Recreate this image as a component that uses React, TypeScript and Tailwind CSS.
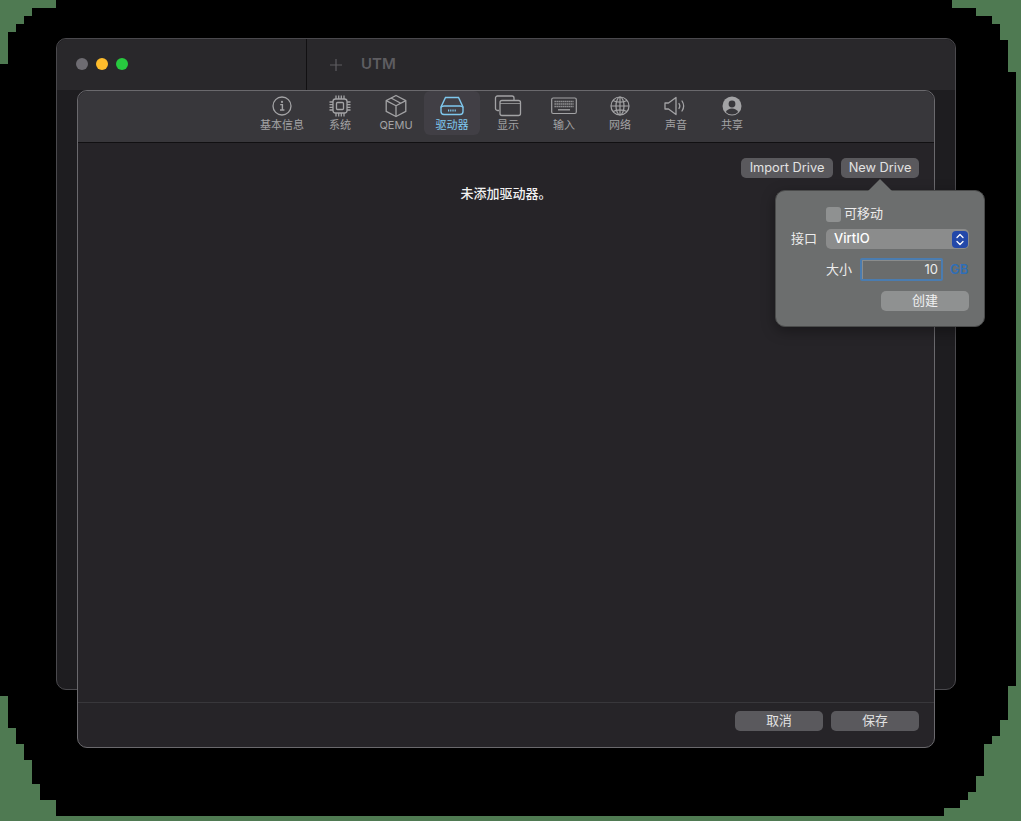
import { ReactNode } from "react";

const cjk = "font-['Inter','Noto_Sans_CJK_SC',sans-serif]";

function InfoIcon() {
  return (
    <svg width="20" height="20" viewBox="0 0 20 20" fill="none" stroke="currentColor" strokeWidth="1.3">
      <circle cx="10" cy="10" r="9" />
      <circle cx="10" cy="5.900" r="1.100" fill="currentColor" stroke="none" />
      <path d="M8.200 8.600h2.200v5.200M8 14h4.400" strokeWidth="1.400" />
    </svg>
  );
}

function CpuIcon() {
  return (
    <svg width="24" height="24" viewBox="0 0 24 24" fill="none" stroke="currentColor" strokeWidth="1.300">
      <rect x="5" y="5" width="14" height="14" rx="2.500" />
      <rect x="8.500" y="8.500" width="7" height="7" rx="1" />
      <path d="M8 1.500V5M10.700 1.500V5M13.300 1.500V5M16 1.500V5M8 19v3.500M10.700 19v3.500M13.300 19v3.500M16 19v3.500M1.500 8H5M1.500 10.700H5M1.500 13.300H5M1.500 16H5M19 8h3.500M19 10.700h3.500M19 13.300h3.500M19 16h3.500" />
    </svg>
  );
}

function BoxIcon() {
  return (
    <svg width="24" height="24" viewBox="0 0 24 24" fill="none" stroke="currentColor" strokeWidth="1.300" strokeLinejoin="round">
      <path d="M12 1.500 21.800 6.600v10.800L12 22.500 2.200 17.400V6.600L12 1.500Z" />
      <path d="M2.200 6.600 12 11.800l9.800-5.200M12 11.800v10.700M7 4l9.800 5.200" />
    </svg>
  );
}

function DriveIcon() {
  return (
    <svg width="26" height="20" viewBox="0 0 26 20" fill="none" stroke="currentColor" strokeWidth="1.400">
      <path d="M6.500 1.500h13l4.500 9.500v4.500a3 3 0 0 1-3 3H5a3 3 0 0 1-3-3V11L6.500 1.500Z" />
      <path d="M2 11.500c.6-1 1.600-1.500 3-1.500h16c1.400 0 2.400.5 3 1.500" />
      <path d="M9 14.500h8" strokeWidth="2" strokeDasharray="1 .8" />
    </svg>
  );
}

function WindowsIcon() {
  return (
    <svg width="28" height="22" viewBox="0 0 28 22" fill="none" stroke="currentColor" strokeWidth="1.300">
      <path d="M5 15.500H3.500a2 2 0 0 1-2-2V3a2 2 0 0 1 2-2H18a2 2 0 0 1 2 2v2.500" />
      <rect x="6" y="5.500" width="20.500" height="15" rx="2" />
      <path d="M6 8.500h20.500" strokeWidth=".8" />
    </svg>
  );
}

function KeyboardIcon() {
  return (
    <svg width="26" height="18" viewBox="0 0 26 18" fill="none" stroke="currentColor" strokeWidth="1.200">
      <rect x=".7" y="1" width="24.600" height="15.500" rx="1.500" />
      <path d="M3.500 4.500h19M3.500 7h19M3.500 9.500h19" strokeWidth="1.300" strokeDasharray="1.300 .7" />
      <path d="M7 12.800h12" strokeWidth="1.300" />
    </svg>
  );
}

function GlobeIcon() {
  return (
    <svg width="20" height="20" viewBox="0 0 20 20" fill="none" stroke="currentColor" strokeWidth="1.200">
      <circle cx="10" cy="10" r="9" />
      <ellipse cx="10" cy="10" rx="4" ry="9" />
      <path d="M10 1v18M1 10h18M3 4.500c3.800 2.200 10.200 2.200 14 0M3 15.500c3.800-2.200 10.200-2.200 14 0" />
    </svg>
  );
}

function SpeakerIcon() {
  return (
    <svg width="24" height="20" viewBox="0 0 24 20" fill="none" stroke="currentColor" strokeWidth="1.300" strokeLinejoin="round" strokeLinecap="round">
      <path d="M1 7v6h3.500l7.500 5.500V1.500L4.500 7H1Z" />
      <path d="M15 7.500a4.500 4.500 0 0 1 0 5M18 5a9 9 0 0 1 0 10" />
    </svg>
  );
}

function UserIcon() {
  return (
    <svg width="20" height="20" viewBox="0 0 20 20">
      <circle cx="10" cy="10" r="9.500" fill="currentColor" />
      <circle cx="10" cy="8" r="3.400" fill="#38373b" />
      <path d="M3.800 16c1.200-2.400 3.400-3.600 6.200-3.600s5 1.200 6.200 3.600A8.800 8.800 0 0 1 10 18.600 8.800 8.800 0 0 1 3.800 16Z" fill="#38373b" />
    </svg>
  );
}

const tabs: { label: string; icon: ReactNode; wide?: boolean; active?: boolean }[] = [
  { label: "基本信息", icon: <InfoIcon />, wide: true },
  { label: "系统", icon: <CpuIcon /> },
  { label: "QEMU", icon: <BoxIcon /> },
  { label: "驱动器", icon: <DriveIcon />, active: true },
  { label: "显示", icon: <WindowsIcon /> },
  { label: "输入", icon: <KeyboardIcon /> },
  { label: "网络", icon: <GlobeIcon /> },
  { label: "声音", icon: <SpeakerIcon /> },
  { label: "共享", icon: <UserIcon /> },
];

function Tab({ label, icon, wide, active }: { label: string; icon: ReactNode; wide?: boolean; active?: boolean }) {
  return (
    <div
      className={`flex h-[44px] flex-col items-center rounded-md ${wide ? "w-[60px]" : "w-14"} ${
        active ? "bg-[#413f45] text-[#7fc8ee]" : "text-[#a3a3a5]"
      }`}
    >
      <div className="flex h-[27px] items-center justify-center pt-[2px]">{icon}</div>
      <span className="text-[11px] leading-[14px]">{label}</span>
    </div>
  );
}

function Button({ label, width }: { label: string; width: string }) {
  return (
    <div className={`flex h-5 items-center justify-center rounded-[5px] bg-[#5a595d] text-[12.800px] text-[#e2e2e2] ${width}`}>
      {label}
    </div>
  );
}

function Popover() {
  return (
    <div className="absolute left-[697px] top-[47px] h-[137px] w-[210px] rounded-[10px] border border-[#4a4b4b] bg-[#6c6e6e] text-[13px] text-[#ececec] shadow-[0_4px_14px_rgba(0,0,0,0.35)]">
      <div className="absolute left-[92px] top-[-12px] h-0 w-0 border-x-[12px] border-b-[12px] border-x-transparent border-b-[#6c6e6e]" />
      <div className="flex flex-col pl-[15px] pr-[15px] pt-[15px]">
        <div className="flex h-4 items-center pl-[35px]">
          <span className="h-[15px] w-[15px] rounded-[3px] bg-[#8f9191]" />
          <span className="ml-[3px]">可移动</span>
        </div>
        <div className="mt-[7px] flex h-5 items-center">
          <span className="w-[35px]">接口</span>
          <div className="flex h-5 flex-1 items-center justify-between rounded-[5px] bg-[#8b8c8c] pl-2 pr-[1px] font-medium text-white">
            <span>VirtIO</span>
            <span className="flex h-[17px] w-[16px] items-center justify-center rounded-[4px] bg-[#2348a9]">
              <svg width="8" height="13" viewBox="0 0 8 13" fill="none" stroke="white" strokeWidth="1.300" strokeLinecap="round" strokeLinejoin="round">
                <path d="M1 4.500 4 1.500l3 3M1 8.500l3 3 3-3" />
              </svg>
            </span>
          </div>
        </div>
        <div className="mt-[9px] flex h-[23px] items-center pl-[35px]">
          <span className="w-[34px]">大小</span>
          <div className="flex h-[23px] w-[83px] items-center justify-end rounded-[2px] border-2 border-[#4a7cb0] bg-[#6a6c6c] pr-[3px] shadow-[inset_1px_1px_0_#8a8c8c]">
            10
          </div>
          <span className="ml-[7px] font-semibold text-[#2f6eb8]">GB</span>
        </div>
        <div className="mt-[10px] flex justify-end">
          <div className="flex h-5 w-[88px] items-center justify-center rounded-[5px] bg-[#8f9191] text-[#f0f0f0]">创建</div>
        </div>
      </div>
    </div>
  );
}

function Sheet() {
  return (
    <div className="absolute left-[20px] top-[51px] flex h-[658px] w-[858px] flex-col rounded-[10px] border border-[#6a696d] bg-[#262428]">
      <div className="flex h-[52px] justify-center rounded-t-[10px] border-b border-[#111012] bg-[#38373b]">
        {tabs.map((t) => (
          <Tab key={t.label} {...t} />
        ))}
      </div>
      <div className="relative flex-1">
        <div className="flex justify-end gap-2 pr-[15px] pt-[15px]">
          <Button label="Import Drive" width="w-[92px]" />
          <Button label="New Drive" width="w-[78px]" />
        </div>
        <p className="mt-[6px] text-center text-[13px] font-medium text-[#f2f2f2]">未添加驱动器。</p>
        <Popover />
      </div>
      <div className="flex h-[45px] items-start justify-end gap-2 border-t border-[#38373b] pr-[15px] pt-2">
        <Button label="取消" width="w-[88px]" />
        <Button label="保存" width="w-[88px]" />
      </div>
    </div>
  );
}

function Window() {
  return (
    <div className="relative h-[652px] w-[900px] rounded-[10px] border border-[#4a494d] bg-[#1e1d20]">
      <div className="flex h-[51px] rounded-t-[10px] bg-[#29282b]">
        <div className="flex w-[250px] items-center gap-2 border-r border-[#111012] pb-[2px] pl-[19px]">
          <span className="h-3 w-3 rounded-full bg-[#6e6c72]" />
          <span className="h-3 w-3 rounded-full bg-[#fdbc2c]" />
          <span className="h-3 w-3 rounded-full bg-[#27c93f]" />
        </div>
        <div className="flex items-center pl-[23px] text-[#5e5d61]">
          <svg width="12" height="12" viewBox="0 0 12 12" stroke="currentColor" strokeWidth="1.200">
            <path d="M6 0v12M0 6h12" />
          </svg>
          <span className="ml-[19px] text-[15px] font-semibold">UTM</span>
        </div>
      </div>
      <Sheet />
    </div>
  );
}

export default function App() {
  return (
    <div className={`relative flex h-[821px] w-[1021px] justify-start overflow-hidden bg-black pl-[56px] pt-[38px] ${cjk}`}>
      <Window />
      {/* green desktop showing through the window shadow corners */}
      <svg className="absolute left-0 top-0" width="1021" height="821" viewBox="0 0 1021 821" fill="#4f7a52">
        <path d="M0 0H56V8H32V16H24V24H16V32H8V64H0Z" />
        <path d="M952 0H1021V686H1016V72H1008V40H1000V24H992V16H976V8H952Z" />
        <path d="M0 696H8V728H16V744H24V760H32V784H40V800H56V816H1021V821H0Z" />
        <path d="M1021 686H1008V720H1000V736H992V744H984V776H976V792H968V800H960V808H944V816H1021Z" />
      </svg>
    </div>
  );
}
